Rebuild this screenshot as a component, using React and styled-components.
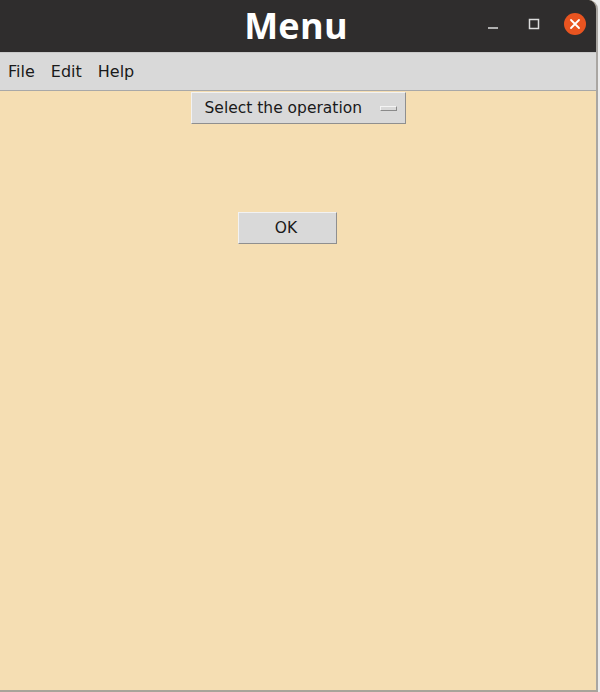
import React from "react";
import styled, { createGlobalStyle } from "styled-components";

const GlobalStyle = createGlobalStyle`
  html, body {
    margin: 0;
    padding: 0;
    background: #ececec;
  }
`;

const Window = styled.div`
  width: 596px;
  height: 690px;
  display: flex;
  flex-direction: column;
  background: #f5deb3;
  border-right: 2px solid #a9a6a2;
  border-bottom: 2px solid #a9a39a;
  border-top-right-radius: 9px;
  overflow: hidden;
`;

const TitleBar = styled.div`
  height: 52px;
  flex: none;
  position: relative;
  display: flex;
  align-items: center;
  justify-content: center;
  background: #2f2d2d;
  color: #ffffff;
  font-family: "Open Sans", "DejaVu Sans", sans-serif;
  font-weight: 700;
  font-size: 36px;
  letter-spacing: 0.3px;
`;

const Title = styled.span`
  margin-left: -4px;
  margin-top: -1px;
`;

const Controls = styled.div`
  position: absolute;
  right: 10px;
  top: 13px;
  display: flex;
  align-items: center;
  gap: 19px;
`;

const CtlButton = styled.div`
  width: 22px;
  height: 22px;
  display: flex;
  align-items: center;
  justify-content: center;
  border-radius: 50%;
  background: ${(p) => (p.$close ? "#e95420" : "transparent")};
`;

const MenuBar = styled.div`
  height: 37px;
  flex: none;
  display: flex;
  align-items: center;
  background: #d9d9d9;
  border-top: 1px solid #c9c9c9;
  border-bottom: 1px solid #a8a8a8;
  font-family: "DejaVu Sans", sans-serif;
  font-size: 16px;
  color: #1a1a1a;
`;

const MenuItem = styled.span`
  padding: 0 8px;
`;

const Content = styled.div`
  display: flex;
  flex-direction: column;
  padding-top: 1px;
  font-family: "DejaVu Sans", sans-serif;
  font-size: 15.5px;
  color: #1a1a1a;
`;

const OptionMenu = styled.div`
  align-self: center;
  width: 215px;
  height: 32px;
  box-sizing: border-box;
  display: flex;
  align-items: center;
  justify-content: space-between;
  padding: 0 8px 0 13px;
  background: #d9d9d9;
  border: 1px solid;
  border-color: #f2f2f2 #8f8f8f #8f8f8f #f2f2f2;
`;

const Indicator = styled.span`
  width: 17px;
  height: 5px;
  box-sizing: border-box;
  background: #d9d9d9;
  border: 1px solid;
  border-color: #f4f4f4 #8a8a8a #8a8a8a #f4f4f4;
`;

const OkButton = styled.div`
  margin: 88px 0 0 238px;
  width: 99px;
  height: 32px;
  box-sizing: border-box;
  display: flex;
  align-items: center;
  justify-content: center;
  padding-right: 3px;
  background: #d9d9d9;
  border: 1px solid;
  border-color: #f2f2f2 #8f8f8f #8f8f8f #f2f2f2;
`;

export default function App() {
  return (
    <>
      <GlobalStyle />
      <Window>
        <TitleBar>
          <Title>Menu</Title>
          <Controls>
            <CtlButton>
              <svg width="12" height="12" viewBox="0 0 12 12">
                <line x1="1" y1="10" x2="11" y2="10" stroke="#dcdcdc" strokeWidth="1.5" />
              </svg>
            </CtlButton>
            <CtlButton>
              <svg width="12" height="12" viewBox="0 0 12 12">
                <rect x="1.5" y="1.5" width="9" height="9" fill="none" stroke="#dcdcdc" strokeWidth="1.5" />
              </svg>
            </CtlButton>
            <CtlButton $close>
              <svg width="12" height="12" viewBox="0 0 12 12">
                <path d="M2 2 L10 10 M10 2 L2 10" stroke="#ffffff" strokeWidth="1.8" strokeLinecap="round" />
              </svg>
            </CtlButton>
          </Controls>
        </TitleBar>
        <MenuBar>
          <MenuItem>File</MenuItem>
          <MenuItem>Edit</MenuItem>
          <MenuItem>Help</MenuItem>
        </MenuBar>
        <Content>
          <OptionMenu>
            <span>Select the operation</span>
            <Indicator />
          </OptionMenu>
          <OkButton>OK</OkButton>
        </Content>
      </Window>
    </>
  );
}
